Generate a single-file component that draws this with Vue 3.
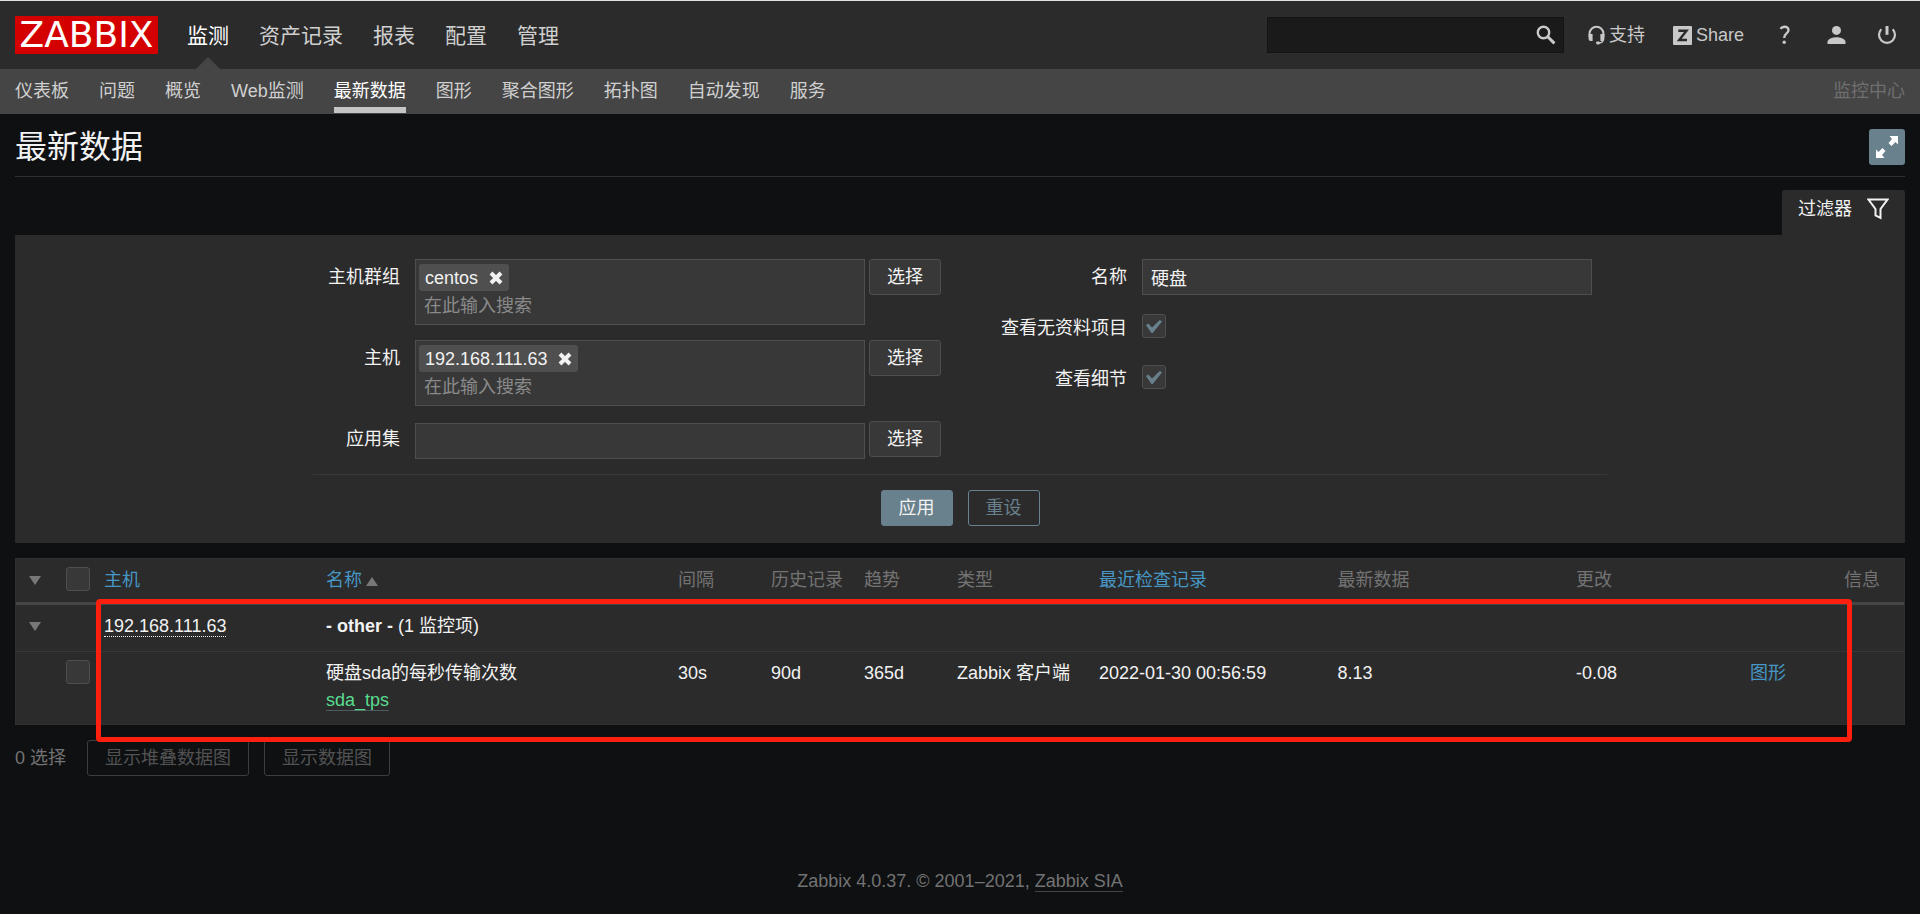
<script setup>
import { ref } from 'vue'

const mainMenu = ['监测', '资产记录', '报表', '配置', '管理']
const subMenu = ['仪表板', '问题', '概览', 'Web监测', '最新数据', '图形', '聚合图形', '拓扑图', '自动发现', '服务']
const activeMain = ref('监测')
const activeSub = ref('最新数据')

const search = ref('')
const name = ref('硬盘')
const application = ref('')
const showEmpty = ref(true)
const showDetails = ref(true)

const multiselects = [
  { id: 'groups', label: '主机群组', tag: 'centos' },
  { id: 'hosts', label: '主机', tag: '192.168.111.63' }
]
</script>

<template>
  <div class="page">
    <header class="top-bar">
      <a class="logo" href="#">ZABBIX</a>
      <nav class="main-nav" aria-label="主菜单">
        <a
          v-for="item in mainMenu"
          :key="item"
          href="#"
          :class="{ selected: item === activeMain }"
          @click.prevent="activeMain = item"
        >{{ item }}</a>
      </nav>
      <form class="search" role="search" @submit.prevent>
        <input v-model="search" type="text" aria-label="搜索">
        <button type="submit" aria-label="搜索">
          <svg width="20" height="20" viewBox="0 0 20 20" fill="none" stroke="currentColor">
            <circle cx="7.5" cy="7.5" r="5.7" stroke-width="2.4" />
            <path d="M11.8 11.8L18.4 18.4" stroke-width="3" />
          </svg>
        </button>
      </form>
      <a class="user-link support" href="#">
        <svg width="17" height="20" viewBox="0 0 17 20">
          <path d="M1.6 12V8.6a6.9 6.9 0 0 1 13.8 0V12" fill="none" stroke="currentColor" stroke-width="2" />
          <path d="M.6 9h4v7h-2a2 2 0 0 1-2-2zM12.4 9h4v5a2 2 0 0 1-2 2h-2z" fill="currentColor" />
          <path d="M15.3 14.5c0 2-1.600 3.200-4 3.500" fill="none" stroke="currentColor" stroke-width="1.400" />
          <rect x="8" y="16.600" width="4" height="2.800" rx="1.400" fill="currentColor" />
        </svg>
        支持
      </a>
      <a class="user-link share" href="#">
        <svg width="19" height="19" viewBox="0 0 19 19">
          <rect width="19" height="19" rx="1" fill="currentColor" />
          <path d="M5.300 4.800H13.500L6.200 14H14" fill="none" stroke="#2b2b2b" stroke-width="2.400" />
        </svg>
        Share
      </a>
      <a class="user-link help" href="#" aria-label="帮助">
        <svg width="12" height="20" viewBox="0 0 12 20">
          <path d="M1.500 3.800C2.500 2.200 3.800 1.700 5.500 1.700C8 1.700 9.500 3.100 9.500 5.200C9.500 8.600 5.200 8.400 5.200 13" fill="none" stroke="currentColor" stroke-width="2.400" />
          <circle cx="5.200" cy="17.300" r="1.700" fill="currentColor" />
        </svg>
      </a>
      <a class="user-link profile" href="#" aria-label="用户">
        <svg width="19" height="20" viewBox="0 0 19 20" fill="currentColor">
          <circle cx="9.500" cy="5.400" r="4.500" />
          <path d="M.5 19V16.500C1.500 13.500 6 12.300 9.500 12.300S17.500 13.500 18.500 16.500V19z" />
        </svg>
      </a>
      <a class="user-link logout" href="#" aria-label="退出">
        <svg width="20" height="20" viewBox="0 0 20 20" fill="none" stroke="currentColor">
          <path d="M4.300 4.200A8 8 0 1 0 15.700 4.200" stroke-width="2.200" />
          <path d="M10 1V9.800" stroke-width="3" />
        </svg>
      </a>
    </header>

    <nav class="sub-bar" aria-label="子菜单">
      <a
        v-for="item in subMenu"
        :key="item"
        href="#"
        :class="{ selected: item === activeSub }"
        @click.prevent="activeSub = item"
      >{{ item }}</a>
      <span class="server-name">监控中心</span>
    </nav>

    <main>
      <div class="title-bar">
        <h1>最新数据</h1>
        <button class="fullscreen" type="button" aria-label="全屏">
          <svg width="22" height="22" viewBox="0 0 22 22" fill="currentColor">
            <path d="M13.500 0H22V8.500L19.500 6L15.500 10L12.500 7L16 3z" />
            <path d="M8.500 22H0V13.500L2.500 16L6.500 12L9.500 15L6 19z" />
          </svg>
        </button>
      </div>

      <div class="tab-row">
        <a class="filter-tab" href="#" @click.prevent>
          过滤器
          <svg width="22" height="22" viewBox="0 0 22 22" fill="none" stroke="currentColor" stroke-width="2">
            <path d="M1.500 1.500H20.500L13.500 11V20L8.500 17.500V11z" />
          </svg>
        </a>
      </div>

      <form class="filter" @submit.prevent>
        <div class="filter-columns">
          <div class="filter-column left">
            <div v-for="field in multiselects" :key="field.id" class="field">
              <label :for="field.id">{{ field.label }}</label>
              <div class="multiselect">
                <span class="tag">
                  {{ field.tag }}
                  <button type="button" :aria-label="'移除 ' + field.tag">
                    <svg width="14" height="14" viewBox="0 0 14 14" fill="none" stroke="currentColor" stroke-width="4">
                      <path d="M2 2L12 12M12 2L2 12" />
                    </svg>
                  </button>
                </span>
                <input :id="field.id" type="text" placeholder="在此输入搜索">
              </div>
              <button class="btn grey" type="button">选择</button>
            </div>
            <div class="field">
              <label for="application">应用集</label>
              <input id="application" v-model="application" class="text application" type="text">
              <button class="btn grey" type="button">选择</button>
            </div>
          </div>
          <div class="filter-column right">
            <div class="field">
              <label for="name">名称</label>
              <input id="name" v-model="name" class="text" type="text">
            </div>
            <div class="field">
              <label for="show-empty">查看无资料项目</label>
              <input id="show-empty" v-model="showEmpty" type="checkbox">
            </div>
            <div class="field">
              <label for="show-details">查看细节</label>
              <input id="show-details" v-model="showDetails" type="checkbox">
            </div>
          </div>
        </div>
        <div class="filter-actions">
          <button class="btn primary" type="submit">应用</button>
          <button class="btn outline" type="reset">重设</button>
        </div>
      </form>

      <div class="data">
        <table>
          <colgroup>
            <col class="c-toggle"><col class="c-check"><col class="c-host"><col class="c-name">
            <col class="c-short"><col class="c-short"><col class="c-short"><col class="c-type">
            <col><col><col class="c-change"><col class="c-graph"><col class="c-info">
          </colgroup>
          <thead>
            <tr>
              <th class="toggle"><button type="button" aria-label="全部折叠"><span class="arrow down"></span></button></th>
              <th><input type="checkbox" aria-label="全选"></th>
              <th><a href="#">主机</a></th>
              <th><a href="#">名称</a> <span class="arrow up"></span></th>
              <th>间隔</th>
              <th>历史记录</th>
              <th>趋势</th>
              <th>类型</th>
              <th><a href="#">最近检查记录</a></th>
              <th>最新数据</th>
              <th>更改</th>
              <th></th>
              <th>信息</th>
            </tr>
          </thead>
          <tbody>
            <tr>
              <td class="toggle"><button type="button" aria-label="折叠"><span class="arrow down"></span></button></td>
              <td></td>
              <td><a class="host" href="#">192.168.111.63</a></td>
              <td colspan="10"><b>- other -</b> (1 监控项)</td>
            </tr>
            <tr>
              <td></td>
              <td><input type="checkbox" aria-label="选择 硬盘sda的每秒传输次数"></td>
              <td></td>
              <td>硬盘sda的每秒传输次数<br><a class="key" href="#">sda_tps</a></td>
              <td>30s</td>
              <td>90d</td>
              <td>365d</td>
              <td>Zabbix 客户端</td>
              <td>2022-01-30 00:56:59</td>
              <td>8.13</td>
              <td>-0.08</td>
              <td><a href="#">图形</a></td>
              <td></td>
            </tr>
          </tbody>
        </table>
        <div class="highlight"></div>
      </div>

      <div class="bulk-actions">
        <span>0 选择</span>
        <button class="btn" type="button" disabled>显示堆叠数据图</button>
        <button class="btn" type="button" disabled>显示数据图</button>
      </div>
    </main>

    <footer>Zabbix 4.0.37. © 2001–2021, <a href="#">Zabbix SIA</a></footer>
  </div>
</template>

<style>
body {
  background: #0e1012;
}
</style>

<style scoped>
.page,
.page * {
  box-sizing: border-box;
}

.page {
  color: #f2f2f2;
  font-family: "Liberation Sans", "Noto Sans CJK SC", sans-serif;
  font-size: 18px;
  line-height: 28px;
}

a {
  color: #4796c4;
  text-decoration: none;
}

button,
input {
  margin: 0;
  padding: 0;
  border: 0;
  border-radius: 0;
  background: none;
  color: inherit;
  font: inherit;
}

button:not(:disabled) {
  cursor: pointer;
}

svg {
  display: block;
  flex: none;
}

.top-bar {
  display: flex;
  align-items: center;
  height: 69px;
  padding: 0 23px 0 15px;
  border-top: 1px solid #dfe3e0;
  background: #2b2b2b;
}

.logo {
  width: 143px;
  height: 38px;
  background: #d40000;
  color: #fff;
  font-family: "DejaVu Sans", sans-serif;
  font-size: 36px;
  line-height: 38px;
  text-align: center;
}

.main-nav {
  display: flex;
  gap: 30px;
  height: 100%;
  margin-left: 29px;
  font-size: 21px;
  line-height: 70px;
}

.main-nav a {
  position: relative;
  color: #d0d0d0;
}

.main-nav a.selected {
  color: #fff;
}

.main-nav a.selected::after {
  content: "";
  position: absolute;
  bottom: 0;
  left: 50%;
  margin-left: -12px;
  border: 12px solid transparent;
  border-top-width: 0;
  border-bottom-color: #454545;
}

.search {
  display: flex;
  align-items: center;
  width: 297px;
  height: 36px;
  margin-left: auto;
  padding-right: 7px;
  border: 1px solid #141414;
  background: #1a1a1a;
  color: #c8c8c8;
}

.search input {
  flex: 1;
  min-width: 0;
  height: 100%;
  padding: 0 8px;
}

.user-link {
  display: flex;
  align-items: center;
  gap: 4px;
  color: #c8c8c8;
}

.support { margin-left: 24px; }
.share { margin-left: 28px; }
.help { margin-left: 35px; }
.profile { margin-left: 36px; }
.logout { margin-left: 31px; }

.sub-bar {
  display: flex;
  gap: 30px;
  height: 45px;
  padding: 0 15px;
  background: #454545;
  line-height: 45px;
}

.sub-bar a {
  height: 44px;
  color: #d0d0d0;
}

.sub-bar a.selected {
  border-bottom: 6px solid #c5c5c5;
  color: #fff;
}

.server-name {
  margin-left: auto;
  color: #6f6f6f;
}

main {
  padding: 0 15px;
}

.title-bar {
  display: flex;
  align-items: center;
  justify-content: space-between;
  height: 63px;
  padding-top: 4px;
  border-bottom: 1px solid #303030;
}

h1 {
  margin: 0;
  font-size: 32px;
  font-weight: 400;
  line-height: 36px;
}

.fullscreen {
  display: flex;
  align-items: center;
  justify-content: center;
  width: 36px;
  height: 36px;
  border-radius: 3px;
  background: #69808d;
  color: #fff;
}

.tab-row {
  display: flex;
  justify-content: flex-end;
  margin-top: 13px;
}

.filter-tab {
  display: flex;
  align-items: center;
  gap: 15px;
  height: 45px;
  padding: 0 16px 8px;
  border-radius: 3px 3px 0 0;
  background: #2b2b2b;
  color: #f2f2f2;
}

.filter {
  padding: 24px 15px 17px;
  background: #2b2b2b;
}

.filter-columns,
.filter-column {
  display: flex;
}

.filter-columns {
  justify-content: space-between;
  max-width: 1294px;
  margin: 0 auto;
  padding: 0 15px 15px 0;
  border-bottom: 1px solid #383838;
}

.filter-column {
  flex-direction: column;
  gap: 15px;
}

.field {
  display: flex;
  align-items: flex-start;
}

.field label {
  margin-right: 15px;
  line-height: 36px;
  text-align: right;
}

.left label { width: 87px; }
.right label { width: 140px; }

.multiselect {
  width: 450px;
  height: 66px;
  padding: 4px 3px;
  border: 1px solid #4f4f4f;
  background: #383838;
}

.tag {
  display: flex;
  align-items: center;
  gap: 11px;
  width: max-content;
  height: 27px;
  padding: 0 6px;
  border-radius: 3px;
  background: #4f4f4f;
  line-height: 26px;
}

.multiselect input {
  display: block;
  width: 100%;
  height: 30px;
  padding: 0 5px;
}

.multiselect input::placeholder {
  color: #8a8a8a;
}

.text {
  width: 450px;
  height: 36px;
  padding: 0 8px;
  border: 1px solid #4f4f4f;
  background: #383838;
}

.application {
  margin-top: 2px;
}

.btn {
  height: 36px;
  padding: 0 17px;
  border: 1px solid #4f4f4f;
  border-radius: 3px;
  line-height: 34px;
}

.btn.grey {
  margin-left: 4px;
  background: #383838;
}

.btn.primary {
  border-color: #69808d;
  background: #69808d;
}

.btn.outline {
  border-color: #69808d;
  color: #69808d;
}

.btn:disabled {
  border-color: #3d3d3d;
  color: #525252;
}

.filter-actions {
  display: flex;
  justify-content: center;
  gap: 15px;
  padding-top: 15px;
}

input[type="checkbox"] {
  display: block;
  width: 24px;
  height: 24px;
  border: 1px solid #4f4f4f;
  border-radius: 3px;
  background: #383838;
  appearance: none;
}

.field input[type="checkbox"] {
  margin-top: 4px;
}

input[type="checkbox"]:checked::before {
  content: "";
  display: block;
  width: 16px;
  height: 13px;
  margin: 5px 3px;
  background: #69808d;
  clip-path: polygon(0 38%, 14% 26%, 38% 58%, 86% 0, 100% 12%, 42% 100%, 34% 100%);
}

.data {
  position: relative;
  margin-top: 15px;
}

table {
  width: 100%;
  border: 1px solid #303030;
  border-spacing: 0;
  background: #2b2b2b;
  line-height: 27px;
  table-layout: fixed;
}

.c-toggle { width: 41px; }
.c-check { width: 38px; }
.c-host { width: 222px; }
.c-name { width: 352px; }
.c-short { width: 93px; }
.c-type { width: 142px; }
.c-change { width: 174px; }
.c-graph { width: 94px; }
.c-info { width: 69px; }

th,
td {
  padding: 8px 0 10px 9px;
  text-align: left;
  vertical-align: top;
  white-space: nowrap;
}

th {
  padding-bottom: 8px;
  border-bottom: 3px solid #454545;
  color: #737373;
  font-weight: 400;
}

tbody tr:first-child td {
  padding-bottom: 11px;
  border-bottom: 1px solid #383838;
}

.toggle {
  padding-left: 13px;
}

.toggle button {
  display: flex;
  align-items: center;
  height: 27px;
}

.arrow {
  display: inline-block;
  border: 6px solid transparent;
}

.arrow.down {
  border-top: 9px solid #787878;
  border-bottom-width: 0;
}

.arrow.up {
  margin-left: -1px;
  border-top-width: 0;
  border-bottom: 9px solid #787878;
}

.host {
  border-bottom: 1px dotted #f2f2f2;
  color: #f2f2f2;
}

.key {
  border-bottom: 1px solid #4f5a62;
  color: #59db8f;
}

.highlight {
  position: absolute;
  top: 41px;
  right: 53px;
  bottom: -17px;
  left: 81px;
  border: 5px solid #ff1f0f;
  border-radius: 4px;
  pointer-events: none;
}

.bulk-actions {
  display: flex;
  align-items: center;
  gap: 15px;
  margin-top: 15px;
  color: #737373;
}

.bulk-actions span {
  margin-right: 6px;
}

footer {
  padding: 91px 15px 15px;
  color: #737373;
  text-align: center;
}

footer a {
  border-bottom: 1px solid #3d464c;
  color: #737373;
}
</style>
